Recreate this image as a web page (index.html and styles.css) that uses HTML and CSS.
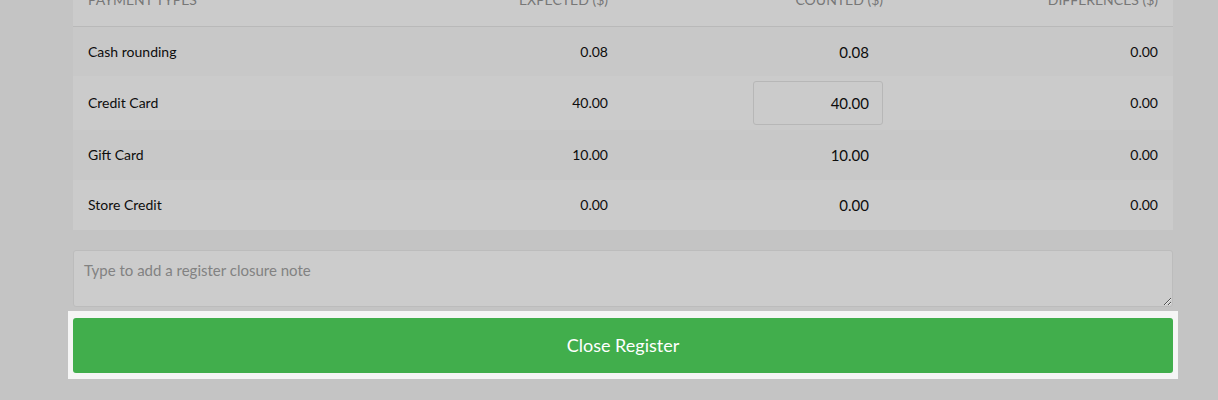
FILE: index.html
```html
<!DOCTYPE html>
<html>
<head>
<meta charset="utf-8">
<link rel="stylesheet" href="styles.css">
</head>
<body>
<div class="page">
  <table class="pay">
    <thead>
      <tr>
        <th class="left">Payment Types</th>
        <th>Expected ($)</th>
        <th>Counted ($)</th>
        <th>Differences ($)</th>
      </tr>
    </thead>
    <tbody>
      <tr class="odd">
        <td class="left">Cash rounding</td>
        <td>0.08</td>
        <td class="counted"><span class="cval">0.08</span></td>
        <td>0.00</td>
      </tr>
      <tr class="even">
        <td class="left">Credit Card</td>
        <td>40.00</td>
        <td class="counted inputcell"><input class="cinput" type="text" value="40.00"></td>
        <td>0.00</td>
      </tr>
      <tr class="odd">
        <td class="left">Gift Card</td>
        <td>10.00</td>
        <td class="counted"><span class="cval">10.00</span></td>
        <td>0.00</td>
      </tr>
      <tr class="even">
        <td class="left">Store Credit</td>
        <td>0.00</td>
        <td class="counted"><span class="cval">0.00</span></td>
        <td>0.00</td>
      </tr>
    </tbody>
  </table>
  <textarea class="note" placeholder="Type to add a register closure note"></textarea>
  <div class="spot">
    <button class="close-btn">Close Register</button>
  </div>
</div>
</body>
</html>
```
FILE: styles.css
```css
html, body {
  margin: 0;
  padding: 0;
  background: #c4c4c4;
  font-family: Lato, "Liberation Sans", sans-serif;
  overflow: hidden;
}
.page {
  width: 1100px;
  margin-left: 73px;
  display: flex;
  flex-direction: column;
}
.pay {
  width: 1100px;
  border-collapse: collapse;
  table-layout: fixed;
  margin-top: -25px;
}
.pay th {
  background: #cbcbcb;
  color: #777;
  font-size: 14px;
  font-weight: 400;
  text-transform: uppercase;
  line-height: 20px;
  padding: 15px 15px 16px 15px;
  text-align: right;
  border-bottom: 1px solid #b9b9b9;
  height: 20px;
}
.pay td {
  font-size: 14px;
  color: #0d0d0d;
  line-height: 20px;
  padding: 15px;
  text-align: right;
  height: 20px;
}
.pay th.left, .pay td.left {
  text-align: left;
}
.pay tr.odd td { background: #c8c8c8; }
.pay tr.even td { background: #cbcbcb; }
.pay tr:first-child td { padding-top: 15px; padding-bottom: 14px; }
.pay td.counted {
  font-size: 15px;
  padding-right: 29px;
}
.pay td.inputcell {
  padding: 5px 15px;
  height: 44px;
}
.cinput {
  box-sizing: border-box;
  width: 130px;
  height: 44px;
  border: 1px solid #b7b7b7;
  border-radius: 3px;
  background: #cbcbcb;
  font-family: Lato, "Liberation Sans", sans-serif;
  font-size: 15px;
  color: #0d0d0d;
  text-align: right;
  padding: 0 13px;
  display: block;
  margin-left: auto;
  outline: none;
}
.note {
  box-sizing: border-box;
  width: 1100px;
  height: 57px;
  margin: 20px 0 0 0;
  border: 1px solid #bcbcbc;
  border-radius: 3px;
  background: #cccccc;
  font-family: Lato, "Liberation Sans", sans-serif;
  font-size: 15px;
  padding: 10px 10px;
  color: #111;
  resize: vertical;
  outline: none;
  display: block;
}
.note::placeholder {
  color: #828282;
}
.spot {
  margin: 4px -5px 0 -5px;
  padding: 7px 5px 6px 5px;
  background: #f5f5f5;
}
.close-btn {
  display: block;
  width: 1100px;
  height: 55px;
  border: none;
  border-radius: 3px;
  background: #41ae4c;
  color: #fff;
  font-family: Lato, "Liberation Sans", sans-serif;
  font-size: 18px;
  padding: 0 0 1px 0;
  cursor: pointer;
}
```
